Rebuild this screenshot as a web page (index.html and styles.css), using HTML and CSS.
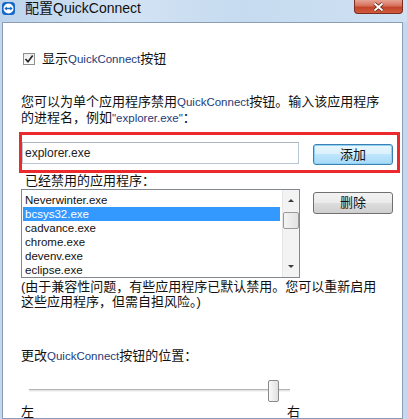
FILE: index.html
```html
<!DOCTYPE html>
<html lang="zh-CN">
  <head>
    <meta charset="UTF-8" />
    <meta name="viewport" content="width=device-width, initial-scale=1.0" />
    <title>配置QuickConnect</title>

    <link rel="stylesheet" href="styles.css">
  </head>
  <body>
    <div class="titlebar">
      <svg class="app-icon" width="13" height="13" viewBox="0 0 13 13">
        <rect x="0" y="0" width="13" height="13" rx="3.5" fill="#1467c8" />
        <circle cx="6.5" cy="6.5" r="5" fill="#fff" />
        <path d="M2.3 6.5 L4.8 4.4 V5.7 H8.2 V4.4 L10.7 6.5 L8.2 8.6 V7.3 H4.8 V8.6 Z" fill="#1467c8" />
      </svg>
      <span class="title">配置<span class="en-title">QuickConnect</span></span>
      <div class="close">
        <svg width="11" height="10" viewBox="0 0 11 10">
          <path d="M1.5 1.5 L9.5 8.5 M9.5 1.5 L1.5 8.5" stroke="#5a1a12" stroke-width="3.4" />
          <path d="M1.5 1.5 L9.5 8.5 M9.5 1.5 L1.5 8.5" stroke="#fff" stroke-width="2" />
        </svg>
      </div>
    </div>

    <div class="client">
      <div class="check-row">
        <span class="checkbox">
          <svg width="10" height="10" viewBox="0 0 10 10">
            <path d="M1.5 5 L4 7.8 L8.7 1.6" fill="none" stroke="#222" stroke-width="1.6" />
          </svg>
        </span>
        <span>显示<span class="en">QuickConnect</span>按钮</span>
      </div>

      <p class="para">您可以为单个应用程序禁用<span class="en">QuickConnect</span>按钮。输入该应用程序<br>的进程名，例如<span class="en">"explorer.exe"</span>：</p>

      <div class="mark-box">
        <div class="textbox">explorer.exe</div>
        <div class="btn btn-default">添加</div>
      </div>

      <div class="label list-label">已经禁用的应用程序：</div>

      <div class="list-row">
        <div class="listbox">
          <ul class="items">
            <li>Neverwinter.exe</li>
            <li class="selected">bcsys32.exe</li>
            <li>cadvance.exe</li>
            <li>chrome.exe</li>
            <li>devenv.exe</li>
            <li>eclipse.exe</li>
          </ul>
          <div class="scrollbar">
            <div class="sb-btn"><span class="arrow-up"></span></div>
            <div class="sb-thumb"></div>
            <div class="sb-space"></div>
            <div class="sb-btn"><span class="arrow-down"></span></div>
          </div>
        </div>
        <div class="btn btn-delete">删除</div>
      </div>

      <p class="note">(由于兼容性问题，有些应用程序已默认禁用。您可以重新启用<br>这些应用程序，但需自担风险。)</p>

      <div class="label pos-label">更改<span class="en">QuickConnect</span>按钮的位置：</div>

      <div class="slider">
        <div class="track"></div>
        <div class="thumb"></div>
      </div>

      <div class="slider-labels">
        <span>左</span>
        <span>右</span>
      </div>
    </div>
  </body>
</html>
```

FILE: styles.css
```css
* {
  margin: 0;
  padding: 0;
  box-sizing: border-box;
}

body {
  width: 407px;
  height: 419px;
  overflow: hidden;
  background-color: #c5d9ee;
  font-family: "Liberation Sans", "Noto Sans CJK SC", sans-serif;
  font-size: 13px;
  color: #111;
}

.titlebar {
  height: 22px;
  display: flex;
  align-items: flex-start;
  background: linear-gradient(to right, #bcd3eb, #d2e3f4 30%, #c6dbef 60%, #cfe1f3);
}

.app-icon {
  margin: 2px 0 0 2px;
}

.title {
  margin-left: 10px;
  font-size: 14px;
  line-height: 16px;
  color: #111;
}

.close {
  margin-left: auto;
  margin-right: 4px;
  width: 49px;
  height: 14px;
  border: 1px solid #7b2d22;
  border-top: none;
  border-radius: 0 0 4px 4px;
  background: linear-gradient(to bottom, #e6a395, #d7705b 45%, #c4442a 55%, #cf5a3c);
  display: flex;
  justify-content: center;
  align-items: center;
}

.client {
  margin-left: 2px;
  width: 401px;
  height: 397px;
  border: 1px solid #8c9eb5;
  background-color: #fff;
  padding-left: 18px;
}

.en {
  font-size: 11.5px;
  color: #243a78;
}

.check-row {
  margin-top: 29px;
  height: 14px;
  line-height: 14px;
  display: flex;
  align-items: center;
  gap: 7px;
}

.checkbox {
  margin-left: 2px;
  width: 12px;
  height: 12px;
  border: 1px solid #8e8f8f;
  background: linear-gradient(to bottom, #ececec, #fdfdfd);
  display: flex;
  justify-content: center;
  align-items: center;
}

.para {
  margin-top: 28px;
  line-height: 15px;
  white-space: nowrap;
}

.mark-box {
  margin-top: 6px;
  margin-left: -2px;
  width: 381px;
  height: 41px;
  border: 3px solid #ec2a2e;
  padding-top: 7px;
  display: flex;
  align-items: flex-start;
}

.textbox {
  width: 277px;
  height: 22px;
  border: 1px solid #b9c6d6;
  border-top-color: #abb4c0;
  padding-left: 2px;
  font-size: 12px;
  line-height: 20px;
  color: #222;
}

.btn {
  width: 80px;
  height: 21px;
  border: 1px solid #707070;
  border-radius: 3px;
  background: linear-gradient(to bottom, #f2f2f2, #ebebeb 50%, #dddddd 50%, #cfcfcf);
  text-align: center;
  line-height: 19px;
  font-size: 13px;
}

.btn-default {
  margin-left: 14px;
  margin-top: 2px;
  border-color: #3c7fb1;
  background: linear-gradient(to bottom, #eaf6fd, #d9f0fc 50%, #bee6fd 50%, #a7d9f5);
  box-shadow: inset 0 0 0 1px #8fd2f8;
}

.label {
  height: 14px;
  line-height: 14px;
  white-space: nowrap;
}

.list-label {
  margin-top: 1px;
  padding-left: 4px;
}

.list-row {
  margin-top: 1px;
  display: flex;
  align-items: flex-start;
}

.listbox {
  width: 279px;
  height: 89px;
  border: 1px solid #828790;
  display: flex;
  overflow: hidden;
}

.items {
  flex: 1;
  list-style: none;
  padding-top: 3px;
  margin-left: 1px;
  margin-right: 2px;
}

.items li {
  height: 14px;
  line-height: 14px;
  padding-left: 2px;
  font-size: 11.5px;
  color: #111;
}

.items .selected {
  background-color: #3399ff;
  color: #fff;
}

.scrollbar {
  width: 17px;
  display: flex;
  flex-direction: column;
  background-color: #f3f3f3;
  border-left: 1px solid #e6e6e6;
}

.sb-btn {
  height: 21px;
  display: flex;
  justify-content: center;
  align-items: center;
}

.arrow-up {
  border-left: 3px solid transparent;
  border-right: 3px solid transparent;
  border-bottom: 3px solid #3c3c3c;
}

.arrow-down {
  border-left: 3px solid transparent;
  border-right: 3px solid transparent;
  border-top: 3px solid #3c3c3c;
}

.sb-thumb {
  margin: 1px 0 0 0;
  height: 17px;
  border: 1px solid #9a9a9a;
  border-radius: 2px;
  background: linear-gradient(to right, #f4f4f4, #e2e2e2);
}

.sb-space {
  flex: 1;
}

.btn-delete {
  margin-left: 13px;
  margin-top: 3px;
  height: 22px;
  line-height: 20px;
}

.note {
  margin-top: 1px;
  line-height: 15px;
  white-space: nowrap;
}

.pos-label {
  margin-top: 40px;
}

.slider {
  position: relative;
  margin-top: 14px;
  margin-left: 8px;
  width: 261px;
  height: 26px;
}

.track {
  position: absolute;
  left: 0;
  right: 0;
  top: 12px;
  height: 3px;
  border-top: 1px solid #b4b4b4;
  background-color: #e4e4e4;
  border-bottom: 1px solid #f4f4f4;
}

.thumb {
  position: absolute;
  left: 239px;
  top: 3px;
  width: 11px;
  height: 22px;
  border: 1px solid #8a8a8a;
  border-radius: 2px;
  background: linear-gradient(to right, #fafafa, #e0e0e0);
}

.slider-labels {
  margin-top: 2px;
  width: 279px;
  line-height: 13px;
  display: flex;
  justify-content: space-between;
}
```
